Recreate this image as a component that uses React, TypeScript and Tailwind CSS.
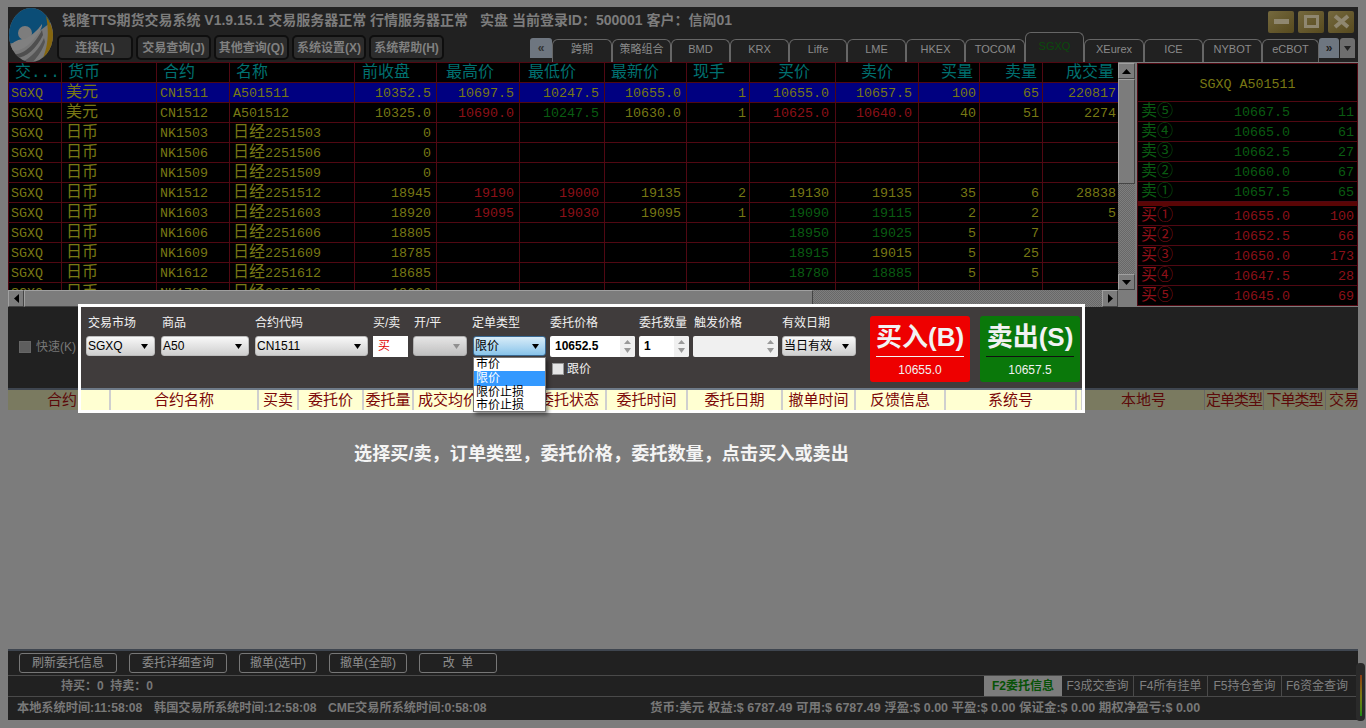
import React from 'react';

const MONO = "font-['Liberation_Mono','Noto_Sans_CJK_SC',monospace]";
const SANS = "font-['Liberation_Sans','Noto_Sans_CJK_SC',sans-serif]";

const colWidths = [54, 95, 73, 125, 82, 83, 85, 82, 63, 86, 83, 61, 63, 75];
const headers = ['交...', '货币', '合约', '名称', '前收盘', '最高价', '最低价', '最新价', '现手', '买价', '卖价', '买量', '卖量', '成交量'];
const headerPad = [6, 6, 6, 6, 7, 9, 8, 6, 6, 28, 25, 22, 25, 23];
const valuePad = [5, 5, 5, 5, 3, 6, 6, 3, 3, 2];

type Cell = string | { v: string; c: string };
const R = 'text-[#8c1018]';
const G = 'text-[#0a5c12]';
const r = (v: string) => ({ v, c: R });
const g = (v: string) => ({ v, c: G });

const rows: { cur: string; code: string; name: string; vals: Cell[] }[] = [
  { cur: '美元', code: 'CN1511', name: 'A501511', vals: ['10352.5', '10697.5', '10247.5', '10655.0', '1', '10655.0', '10657.5', '100', '65', '220817'] },
  { cur: '美元', code: 'CN1512', name: 'A501512', vals: ['10325.0', r('10690.0'), g('10247.5'), '10630.0', '1', r('10625.0'), r('10640.0'), '40', '51', '2274'] },
  { cur: '日币', code: 'NK1503', name: '2251503', vals: ['0'] },
  { cur: '日币', code: 'NK1506', name: '2251506', vals: ['0'] },
  { cur: '日币', code: 'NK1509', name: '2251509', vals: ['0'] },
  { cur: '日币', code: 'NK1512', name: '2251512', vals: ['18945', r('19190'), r('19000'), '19135', '2', '19130', '19135', '35', '6', '28838'] },
  { cur: '日币', code: 'NK1603', name: '2251603', vals: ['18920', r('19095'), r('19030'), '19095', '1', g('19090'), g('19115'), '2', '2', '5'] },
  { cur: '日币', code: 'NK1606', name: '2251606', vals: ['18805', '', '', '', '', g('18950'), g('19025'), '5', '7', ''] },
  { cur: '日币', code: 'NK1609', name: '2251609', vals: ['18785', '', '', '', '', g('18915'), '19015', '5', '25', ''] },
  { cur: '日币', code: 'NK1612', name: '2251612', vals: ['18685', '', '', '', '', g('18780'), g('18885'), '5', '5', ''] },
  { cur: '日币', code: 'NK1703', name: '2251703', vals: ['18660'] },
];

const sells = [['卖⑤', '10667.5', '11'], ['卖④', '10665.0', '61'], ['卖③', '10662.5', '27'], ['卖②', '10660.0', '67'], ['卖①', '10657.5', '65']];
const buys = [['买①', '10655.0', '100'], ['买②', '10652.5', '66'], ['买③', '10650.0', '173'], ['买④', '10647.5', '28'], ['买⑤', '10645.0', '69']];

const tabs = [
  ['跨期', 60], ['策略组合', 59], ['BMD', 59], ['KRX', 59], ['Liffe', 58], ['LME', 59], ['HKEX', 59], ['TOCOM', 60], ['SGXQ', 59],
  ['XEurex', 60], ['ICE', 59], ['NYBOT', 59], ['eCBOT', 57],
] as const;

const orderCols = [
  ['', 30], ['合约名称', 148], ['买卖', 40], ['委托价', 65], ['委托量', 50], ['成交均价', 70], ['', 49], ['委托状态', 74], ['委托时间', 81],
  ['委托日期', 95], ['撤单时间', 73], ['反馈信息', 90], ['系统号', 131], ['', 6],
] as const;

const Tri = ({ className = 'fill-black' }: { className?: string }) => (
  <svg width="7" height="5" viewBox="0 0 7 5" className={className}><path d="M0 0h7L3.5 5z" /></svg>
);

const Logo = () => (
  <svg width="46" height="56" viewBox="0 0 46 56" className="shrink-0">
    <defs>
      <clipPath id="egg"><ellipse cx="23" cy="27" rx="22" ry="27" /></clipPath>
    </defs>
    <g clipPath="url(#egg)">
      <rect width="46" height="56" fill="#787878" />
      <path d="M0 0h46v12L30 24 20 32 0 36z" fill="#0b4d76" />
      <path d="M38 8c7 10 10 22 8 48H32C41 40 41 22 38 8z" fill="#85660f" />
      <circle cx="17" cy="25" r="7" fill="#7d7d7d" />
      <path d="M1 40c4-7 10-9 16-9 6-3 12-8 17-15 1 4-6 14-14 21-6 5-14 8-19 3z" fill="#808080" />
      <path d="M5 46c10 2 22-10 29-24l1 5C29 40 18 50 8 50z" fill="#4e4e4e" />
      <path d="M14 54c9-4 18-14 22-24l1 4c-3 10-10 18-16 24z" fill="#555" />
    </g>
  </svg>
);

const MenuBtn = ({ label, w }: { label: string; w: string }) => (
  <div className={`${w} h-[25px] shrink-0 rounded-[5px] border-2 border-[#0e0e0e] bg-[#2c2c2c] flex items-center justify-center text-[12px] font-bold text-[#808080]`}>
    {label}
  </div>
);

const WinBtn = ({ children }: { children: React.ReactNode }) => (
  <div className="w-[26px] h-[22px] rounded-[2px] bg-gradient-to-br from-[#75693e] to-[#574a1e] flex items-center justify-center">{children}</div>
);

const Select = ({ text, w, active, disabled }: { text: string; w: string; active?: boolean; disabled?: boolean }) => (
  <div className={`${w} h-[20px] shrink-0 rounded-[3px] border flex items-center justify-between pl-[1px] pr-[6px] text-[12px] text-black ${active ? 'border-[#3a6a94] bg-gradient-to-b from-[#d8ecf8] to-[#88c4ea]' : 'border-[#bdbdbd] bg-gradient-to-b from-[#f8f8f8] to-[#cfcfcf]'} ${disabled ? 'opacity-90' : ''}`}>
    <span>{text}</span>
    <Tri className={disabled ? 'fill-[#999]' : 'fill-black'} />
  </div>
);

const Spin = ({ text, w }: { text: string; w: string }) => (
  <div className={`${w} h-[21px] shrink-0 rounded-[2px] flex ${text ? 'bg-white' : 'bg-[#f0f0f0]'}`}>
    <div className="flex-1 pl-[5px] text-[12px] font-bold leading-[21px] text-black">{text}</div>
    <div className="w-[15px] bg-[#f0f0f0] flex flex-col items-center justify-center gap-[4px] rounded-r-[2px]">
      <svg width="7" height="4" viewBox="0 0 7 4" className="fill-[#999]"><path d="M0 4h7L3.5 0z" /></svg>
      <Tri className="fill-[#999]" />
    </div>
  </div>
);

const Label = ({ text, w }: { text: string; w: string }) => (
  <div className={`${w} shrink-0 text-[12px] leading-[16px] text-[#f0f0f0]`}>{text}</div>
);

const Trade = ({ title, price, bg, line }: { title: string; price: string; bg: string; line: string }) => (
  <div className={`w-[100px] h-[66px] rounded-[3px] ${bg} flex flex-col items-center`}>
    <div className={`w-[88px] h-[41px] border-b text-center text-[26px] font-bold leading-[42px] text-[#f2f2f2] whitespace-nowrap ${line}`}>{title}</div>
    <div className="mt-[5px] text-[12px] leading-[16px] text-[#f2f2f2]">{price}</div>
  </div>
);

const SmallBtn = ({ label, w }: { label: string; w: string }) => (
  <div className={`${w} h-[20px] rounded-[3px] border border-[#777] flex items-center justify-center text-[12px] text-[#8e8e8e] whitespace-pre`}>{label}</div>
);

const ArrowBtn = ({ d }: { d: 'u' | 'd' | 'l' | 'r' }) => {
  const path = { u: 'M0 5h9L4.5 0z', d: 'M0 0h9L4.5 5z', l: 'M5 0v9L0 4.5z', r: 'M0 0v9l5-4.5z' }[d];
  const size = d === 'u' || d === 'd' ? 'w-[17px] h-[16px]' : 'w-[16px] h-[17px]';
  return (
    <div className={`${size} shrink-0 bg-[#7c7c7c] border-t border-l border-[#a0a0a0] border-r border-b border-r-[#444] border-b-[#444] flex items-center justify-center`}>
      <svg width={d === 'u' || d === 'd' ? 9 : 5} height={d === 'u' || d === 'd' ? 5 : 9} viewBox={d === 'u' || d === 'd' ? '0 0 9 5' : '0 0 5 9'}><path d={path} fill="#000" /></svg>
    </div>
  );
};

const DITHER = 'bg-[repeating-conic-gradient(#7e7e7e_0_25%,#686868_0_50%)] bg-[length:2px_2px]';

export default function App() {
  return (
    <div className={`w-[1366px] h-[728px] overflow-hidden relative bg-[#7c7c7c] pt-[7px] pl-[8px] pr-[8px] pb-[8px] ${SANS}`}>
      <div className="w-[1350px] h-[713px] bg-[#212121] flex flex-col">
        {/* title + tabs */}
        <div className="h-[55px] shrink-0 flex">
          <div className="pt-[1px]"><Logo /></div>
          <div className="flex-1 flex flex-col pl-[8px]">
            <div className="h-[27px] flex items-center font-bold text-[14px] text-[#7c7c7c] whitespace-nowrap">
              <span className="w-[418px]">钱隆TTS期货交易系统 V1.9.15.1 交易服务器正常 行情服务器正常</span>
              <span className="flex-1">实盘 当前登录ID：500001 客户：信闳01</span>
              <div className="flex gap-[4px] mr-[4px] mt-[2px]">
                <WinBtn><div className="w-[15px] h-[5px] bg-[#8f8770]" /></WinBtn>
                <WinBtn><div className="w-[15px] h-[13px] border-[3px] border-[#8f8770]" /></WinBtn>
                <WinBtn>
                  <svg width="17" height="15" viewBox="0 0 17 15"><path d="M2 2l13 11M15 2L2 13" stroke="#8f8770" strokeWidth="4" /></svg>
                </WinBtn>
              </div>
            </div>
            <div className="h-[28px] flex items-end">
              <div className="flex items-start gap-[3px] pb-[2px] h-[28px] -ml-[5px] pt-[1px]">
                <MenuBtn label="连接(L)" w="w-[76px]" />
                <MenuBtn label="交易查询(J)" w="w-[75px]" />
                <MenuBtn label="其他查询(Q)" w="w-[75px]" />
                <MenuBtn label="系统设置(X)" w="w-[74px]" />
                <MenuBtn label="系统帮助(H)" w="w-[75px]" />
              </div>
              <div className="ml-[86px] flex items-end h-[30px]">
                <div className="w-[22px] h-[20px] mb-[4px] rounded-t-[3px] bg-[#6e7680] flex items-center justify-center text-[12px] font-bold text-[#333]">«</div>
                {tabs.map(([t, w]) => (
                  <div key={t} style={{ width: w }} className={`shrink-0 rounded-t-[6px] border border-b-0 border-[#666] flex items-center justify-center text-[11px] ${t === 'SGXQ' ? 'h-[30px] text-[#0a4a0c] pb-[3px]' : 'h-[23px] pb-[4px] text-[#8a8a8a]'}`}>
                    {t}
                  </div>
                ))}
                <div className="w-[20px] h-[20px] mb-[4px] rounded-t-[3px] bg-[#6e7680] flex items-center justify-center text-[12px] font-bold text-[#222]">»</div>
                <div className="w-[15px] h-[20px] mb-[4px] ml-[1px] rounded-t-[3px] bg-[#6e6e6e] flex items-center justify-center"><Tri className="fill-[#222]" /></div>
              </div>
            </div>
          </div>
        </div>

        {/* quotes */}
        <div className="h-[245px] shrink-0 flex bg-[#7c7c7c]">
          <div className="w-[1127px] shrink-0 flex flex-col">
            <div className="h-[228px] flex">
              <div className={`w-[1110px] overflow-hidden bg-black border-t border-l border-[#500812] ${MONO}`}>
                <div className="flex h-[20px] border-b border-[#500812]">
                  {headers.map((h, i) => (
                    <div key={i} style={{ width: colWidths[i] - (i === 0 ? 1 : 0), paddingLeft: headerPad[i] }} className={`shrink-0 border-r border-[#500812] text-[16px] leading-[20px] text-[#007070] whitespace-nowrap overflow-hidden ${i === 13 ? 'border-r-0' : ''}`}>
                      {h}
                    </div>
                  ))}
                </div>
                {rows.map((row, ri) => {
                  const cells: Cell[] = [...row.vals, ...Array(10).fill('')].slice(0, 10);
                  return (
                    <div key={ri} className={`flex h-[20px] border-b border-[#500812] ${ri === 0 ? 'bg-[#000080]' : ''} text-[13.35px] leading-[21px] text-[#787814]`}>
                      <div className="w-[53px] shrink-0 border-r border-[#500812] pl-[2px]">SGXQ</div>
                      <div className="w-[95px] shrink-0 border-r border-[#500812] pl-[4px] text-[16px]">{row.cur}</div>
                      <div className="w-[73px] shrink-0 border-r border-[#500812] pl-[3px]">{row.code}</div>
                      <div className="w-[125px] shrink-0 border-r border-[#500812] pl-[3px] whitespace-nowrap">
                        {row.name.startsWith('A') ? row.name : <><span className="text-[16px]">日经</span>{row.name}</>}
                      </div>
                      {cells.map((c, i) => {
                        const v = typeof c === 'string' ? c : c.v;
                        const cl = typeof c === 'string' ? '' : c.c;
                        return (
                          <div key={i} style={{ width: colWidths[i + 4], paddingRight: valuePad[i] }} className={`shrink-0 border-r border-[#500812] text-right ${cl} ${i === 9 ? 'border-r-0' : ''}`}>{v}</div>
                        );
                      })}
                    </div>
                  );
                })}
              </div>
              {/* vertical scrollbar */}
              <div className={`w-[17px] flex flex-col mt-[1px] ${DITHER}`}>
                <ArrowBtn d="u" />
                <div className="h-[105px] bg-[#7c7c7c] border-t border-l border-[#a0a0a0] border-r border-b border-r-[#444] border-b-[#444]" />
                <div className="flex-1" />
                <ArrowBtn d="d" />
              </div>
            </div>
            {/* horizontal scrollbar */}
            <div className={`h-[17px] w-[1110px] flex ${DITHER}`}>
              <ArrowBtn d="l" />
              <div className="w-[789px] bg-[#7c7c7c] border-t border-l border-[#a0a0a0] border-r border-b border-r-[#444] border-b-[#444]" />
              <div className="flex-1" />
              <ArrowBtn d="r" />
            </div>
          </div>

          {/* depth panel */}
          <div className={`w-[222px] ml-[2px] mt-[1px] mb-[1px] bg-black border border-[#500812] flex flex-col ${MONO} text-[13.35px] leading-[21px]`}>
            <div className="h-[38px] shrink-0 border-b border-[#500812] text-center leading-[41px] text-[#787814]">SGXQ A501511</div>
            {sells.map(([a, b, c]) => (
              <div key={a} className="h-[20px] shrink-0 border-b border-[#500812] flex pl-[3px] pr-[3px] text-[#0a5c12]">
                <span className="w-[93px] text-[16px]">{a}</span>
                <span className="w-[57px]">{b}</span>
                <span className="flex-1 text-right">{c}</span>
              </div>
            ))}
            <div className="h-[4px] shrink-0 bg-[#5a0505]" />
            {buys.map(([a, b, c]) => (
              <div key={a} className="h-[20px] shrink-0 border-b border-[#500812] last:border-b-0 flex pl-[3px] pr-[3px] text-[#8c1018]">
                <span className="w-[93px] text-[16px]">{a}</span>
                <span className="w-[57px]">{b}</span>
                <span className="flex-1 text-right">{c}</span>
              </div>
            ))}
          </div>
        </div>

        {/* order form strip, dimmed part */}
        <div className="h-[81px] shrink-0 flex items-center pl-[11px] pb-[2px] text-[12px] text-[#777]">
          <div className="w-[12px] h-[12px] border border-[#666] bg-[#5e5e5e] mr-[5px]" />
          快速(K)
        </div>

        {/* order table header, dimmed part */}
        <div className="h-[22px] shrink-0 border-t-2 border-[#3f4650] bg-[#7c7c7c] flex text-[15px] leading-[19px] text-[#5c0a0a] whitespace-nowrap">
          <div className="w-[72px] h-[20px] bg-[#7a7a60] text-right pr-[3px] mr-[1003px]">合约</div>
          <div className="w-[121px] h-[20px] bg-[#7a7a60] text-center">本地号</div>
          <div className="w-[59px] h-[20px] bg-[#7a7a60] border-l border-[#666] text-center tracking-[-1px]">定单类型</div>
          <div className="w-[62px] h-[20px] bg-[#7a7a60] border-l border-[#666] text-center tracking-[-1px]">下单类型</div>
          <div className="flex-1 h-[20px] bg-[#7a7a60] border-l border-[#666] pl-[3px] overflow-hidden">交易</div>
        </div>

        {/* order list area */}
        <div className="flex-1 bg-[#7c7c7c] border-b-2 border-[#3f4650]" />

        {/* actions */}
        <div className="h-[25px] shrink-0 flex items-center pl-[11px] gap-[12px] border-b border-[#4a4a4a]">
          <SmallBtn label="刷新委托信息" w="w-[98px]" />
          <SmallBtn label="委托详细查询" w="w-[98px]" />
          <SmallBtn label="撤单(选中)" w="w-[78px]" />
          <SmallBtn label="撤单(全部)" w="w-[78px]" />
          <SmallBtn label="改  单" w="w-[78px]" />
        </div>

        {/* holdings + page tabs */}
        <div className="h-[21px] shrink-0 flex items-center border-b border-[#4a4a4a] pl-[53px] text-[12px] font-bold text-[#777]">
          <span className="flex-1">持买：0&nbsp;&nbsp;持卖：0</span>
          <div className="flex h-[20px] mr-[6px] text-[12px] font-normal text-[#808080]">
            <div className="w-[78px] bg-[#7c7c7c] flex items-center justify-center font-bold text-[#075207]">F2委托信息</div>
            <div className="w-[72px] border-r border-[#4a4a4a] flex items-center justify-center">F3成交查询</div>
            <div className="w-[74px] border-r border-[#4a4a4a] flex items-center justify-center">F4所有挂单</div>
            <div className="w-[74px] border-r border-[#4a4a4a] flex items-center justify-center">F5持仓查询</div>
            <div className="w-[70px] flex items-center justify-center">F6资金查询</div>
          </div>
        </div>

        {/* status */}
        <div className="h-[23px] shrink-0 flex items-center pl-[9px] text-[12.2px] font-bold text-[#787878] whitespace-nowrap">
          <span className="w-[137px]">本地系统时间:11:58:08</span>
          <span className="w-[174px]">韩国交易所系统时间:12:58:08</span>
          <span className="w-[322px]">CME交易所系统时间:0:58:08</span>
          <span className="text-[12.5px]">货币:美元 权益:$ 6787.49 可用:$ 6787.49 浮盈:$ 0.00 平盈:$ 0.00 保证金:$ 0.00 期权净盈亏:$ 0.00</span>
        </div>
      </div>

      {/* level meter at the window corner */}
      <div className="absolute left-[1356px] top-[663px] w-[9px] h-[58px] rounded-[4px] bg-[#2a2a2a] flex justify-center pt-[12px] pb-[5px]">
        <div className="w-[2px] h-full bg-gradient-to-b from-[#8a3a14] via-[#7a7a14] to-[#148a14]" />
      </div>

      {/* highlighted order form */}
      <div className="absolute left-[78px] top-[304px] w-[1007px] h-[109px] border-[3px] border-white bg-[#403c3c] flex flex-col">
        <div className="h-[81px] shrink-0 flex">
          <div className="w-[785px] shrink-0 pl-[5px] pt-[8px]">
            <div className="flex h-[20px] pl-[2px]">
              <Label text="交易市场" w="w-[74px]" />
              <Label text="商品" w="w-[93px]" />
              <Label text="合约代码" w="w-[118px]" />
              <Label text="买/卖" w="w-[41px]" />
              <Label text="开/平" w="w-[58px]" />
              <Label text="定单类型" w="w-[78px]" />
              <Label text="委托价格" w="w-[89px]" />
              <Label text="委托数量" w="w-[55px]" />
              <Label text="触发价格" w="w-[88px]" />
              <Label text="有效日期" w="w-[70px]" />
            </div>
            <div className="flex mt-[1px]">
              <Select text="SGXQ" w="w-[69px] mr-[6px]" />
              <Select text="A50" w="w-[88px] mr-[6px]" />
              <Select text="CN1511" w="w-[113px] mr-[5px]" />
              <div className="w-[35px] h-[21px] mr-[5px] shrink-0 bg-white pl-[5px] text-[12px] leading-[21px] text-[#e00000]">买</div>
              <div className="w-[54px] mr-[6px] shrink-0"><Select text="" w="w-[54px]" disabled /></div>
              <Select text="限价" w="w-[73px] mr-[4px]" active />
              <Spin text="10652.5" w="w-[85px] mr-[4px]" />
              <Spin text="1" w="w-[50px] mr-[4px]" />
              <Spin text="" w="w-[85px] mr-[4px]" />
              <Select text="当日有效" w="w-[74px]" />
            </div>
            <div className="flex items-center mt-[3px] ml-[466px] text-[12px] text-[#f0f0f0]">
              <div className="w-[12px] h-[12px] bg-[#e6e6e6] border border-[#999] mr-[3px]" />
              跟价
            </div>
          </div>
          <div className="flex gap-[10px] pt-[9px] pl-[4px]">
            <Trade title="买入(B)" price="10655.0" bg="bg-[#ee0000]" line="border-[#f4f4f4]" />
            <Trade title="卖出(S)" price="10657.5" bg="bg-[#0a780a]" line="border-[#111]" />
          </div>
        </div>
        <div className="h-[2px] shrink-0 bg-[#6e7a88]" />
        <div className="flex-1 flex bg-[#ffffd2] text-[15px] leading-[19px] text-[#7c0808] whitespace-nowrap overflow-hidden">
          {orderCols.map(([t, w], i) => (
            <div key={i} style={{ width: w }} className="shrink-0 border-r-2 border-[#cfcfcf] text-center">{t}</div>
          ))}
        </div>
      </div>

      {/* dropdown list */}
      <div className="absolute left-[473px] top-[357px] w-[73px] h-[55px] bg-white border border-[#777] shadow-[2px_3px_4px_rgba(0,0,0,0.45)] text-[12px] leading-[13px] text-black">
        <div className="h-[13px] pl-[2px]">市价</div>
        <div className="h-[15px] pl-[2px] leading-[15px] bg-[#3399ff] text-white">限价</div>
        <div className="h-[13px] pl-[2px]">限价止损</div>
        <div className="h-[12px] pl-[2px]">市价止损</div>
      </div>

      {/* hint */}
      <div className="absolute left-[354px] top-[443px] text-[18.15px] leading-[22px] font-bold text-[#f4f4f4] whitespace-nowrap">选择买/卖，订单类型，委托价格，委托数量，点击买入或卖出</div>
    </div>
  );
}
